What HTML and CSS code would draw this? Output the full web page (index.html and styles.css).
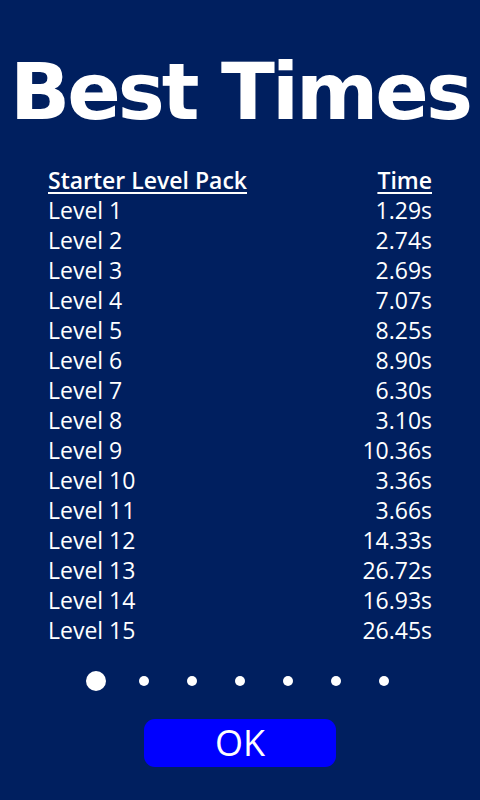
FILE: index.html
```html
<!DOCTYPE html>
<html lang="en">

<head>
    <meta charset="utf-8">
    <title>Best Times</title>
    <link rel="stylesheet" href="styles.css">
</head>

<body>
    <div id="bestTimes" class="screen">
        <h1 class="title">Best Times</h1>

        <div class="times-table">
            <div class="times-head">
                <span>Starter Level Pack</span>
                <span>Time</span>
            </div>
            <div class="times-row"><span>Level 1</span><span>1.29s</span></div>
            <div class="times-row"><span>Level 2</span><span>2.74s</span></div>
            <div class="times-row"><span>Level 3</span><span>2.69s</span></div>
            <div class="times-row"><span>Level 4</span><span>7.07s</span></div>
            <div class="times-row"><span>Level 5</span><span>8.25s</span></div>
            <div class="times-row"><span>Level 6</span><span>8.90s</span></div>
            <div class="times-row"><span>Level 7</span><span>6.30s</span></div>
            <div class="times-row"><span>Level 8</span><span>3.10s</span></div>
            <div class="times-row"><span>Level 9</span><span>10.36s</span></div>
            <div class="times-row"><span>Level 10</span><span>3.36s</span></div>
            <div class="times-row"><span>Level 11</span><span>3.66s</span></div>
            <div class="times-row"><span>Level 12</span><span>14.33s</span></div>
            <div class="times-row"><span>Level 13</span><span>26.72s</span></div>
            <div class="times-row"><span>Level 14</span><span>16.93s</span></div>
            <div class="times-row"><span>Level 15</span><span>26.45s</span></div>
        </div>

        <div class="pager">
            <span class="dot active"></span>
            <span class="dot"></span>
            <span class="dot"></span>
            <span class="dot"></span>
            <span class="dot"></span>
            <span class="dot"></span>
            <span class="dot"></span>
        </div>

        <button id="okButton" class="ok-button">OK</button>
    </div>
</body>

</html>
```

FILE: styles.css
```css
body {
    margin: 0;
    overflow: hidden;
    font-family: 'Open Sans', 'Liberation Sans', sans-serif;
    background-color: #001f5f;
    color: #fff;
}

.screen {
    width: 480px;
    height: 800px;
    display: flex;
    flex-direction: column;
    align-items: center;
}

.title {
    margin: 44px 0 0;
    font-family: 'DejaVu Sans', sans-serif;
    font-weight: bold;
    font-size: 79px;
    line-height: 96px;
    letter-spacing: -3px;
    white-space: nowrap;
}

.times-table {
    align-self: stretch;
    margin-top: 25px;
    padding: 0 48px;
    font-size: 23px;
    line-height: 30px;
}

.times-head,
.times-row {
    display: flex;
    justify-content: space-between;
}

.times-head span {
    font-weight: 600;
    text-decoration: underline;
    text-decoration-thickness: 2px;
    text-underline-offset: 3px;
}

.pager {
    display: flex;
    align-items: center;
    gap: 38px;
    margin-top: 25px;
    height: 22px;
}

.dot {
    width: 10px;
    height: 10px;
    border-radius: 50%;
    background-color: #fff;
}

.dot.active {
    width: 20px;
    height: 20px;
    margin-right: -5px;
    margin-left: -5px;
}

.ok-button {
    margin-top: 27px;
    width: 192px;
    height: 48px;
    border: none;
    border-radius: 11px;
    background-color: #0000ff;
    color: #fff;
    font-family: 'Open Sans', 'Liberation Sans', sans-serif;
    font-size: 36px;
    line-height: 48px;
    padding: 0;
}
```
